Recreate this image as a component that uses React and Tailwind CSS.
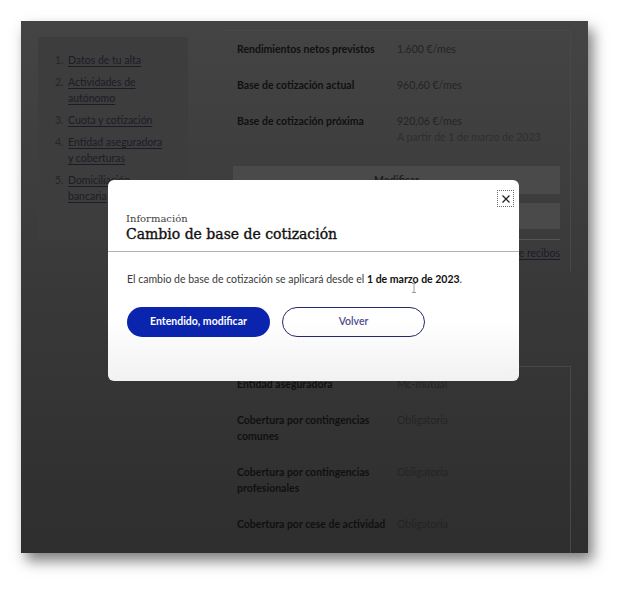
import React from "react";

const navItems = [
  "Datos de tu alta",
  "Actividades de autónomo",
  "Cuota y cotización",
  "Entidad aseguradora y coberturas",
  "Domiciliación bancaria",
];

function Row({ label, value, sub }) {
  return (
    <div className="flex pl-[4px]">
      <div className="w-[160px] shrink-0 font-bold text-[#101010]">{label}</div>
      <div className="flex flex-col">
        <span className="text-[#242424]">{value}</span>
        {sub && <span className="text-[#2e2e2e]">{sub}</span>}
      </div>
    </div>
  );
}

export default function App() {
  return (
    <div className="w-[630px] h-[595px] bg-white pt-[21px] pl-[21px] font-['Lato','Liberation_Sans',sans-serif]">
      <div className="relative w-[567px] h-[532px] overflow-hidden flex items-start px-[17px] bg-linear-to-b from-[#444444] to-[#2e2e2e] shadow-[5px_8px_13px_rgba(0,0,0,0.5)]">
        {/* Sidebar */}
        <aside className="mt-[16px] w-[150px] h-[203px] shrink-0 bg-[#3d3d3d] pl-[17px] pt-[15px]">
          <ol className="flex flex-col gap-[6px] text-[10.5px] leading-[16px]">
            {navItems.map((t, i) => (
              <li key={t} className="flex">
                <span className="w-[13px] shrink-0 text-[#262626]">{i + 1}.</span>
                <span className="w-[100px] underline underline-offset-2 decoration-[#1c1c26] text-[#1c1c26]">
                  {t}
                </span>
              </li>
            ))}
          </ol>
        </aside>

        {/* Main */}
        <main className="ml-[34px] mt-[9px] w-[349px] shrink-0 flex flex-col text-[10.5px] leading-[16px]">
          <section className="border-t border-r border-[#484848] px-[11px] pt-[10px] pr-[10px] pb-[10px]">
            <div className="flex flex-col gap-[20px]">
              <Row label="Rendimientos netos previstos" value="1.600 €/mes" />
              <Row label="Base de cotización actual" value="960,60 €/mes" />
              <Row
                label="Base de cotización próxima"
                value="920,06 €/mes"
                sub="A partir de 1 de marzo de 2023"
              />
            </div>
            <div className="mt-[21px] flex flex-col gap-[9px]">
              <div className="h-[28px] bg-[#4a4a4a] flex items-center justify-center font-bold text-[#1e1e1e]">
                Modificar
              </div>
              <div className="h-[26px] bg-[#4a4a4a] flex items-center justify-center font-bold text-[#1e1e1e]">
                Consultar recibos
              </div>
            </div>
            <div className="mt-[10px] border-t border-[#555555]" />
            <div className="mt-[5px] flex justify-end">
              <span className="underline underline-offset-2 text-[#1c1c26]">Ver histórico de recibos</span>
            </div>
          </section>

          <section className="mt-[95px] border-t border-r border-[#484848] px-[11px] pt-[9px] pb-[30px]">
            <div className="flex flex-col gap-[20px]">
              <Row label="Entidad aseguradora" value="Mc-mutual" />
              <Row label="Cobertura por contingencias comunes" value="Obligatoria" />
              <Row label="Cobertura por contingencias profesionales" value="Obligatoria" />
              <Row label="Cobertura por cese de actividad" value="Obligatoria" />
            </div>
          </section>
        </main>

        {/* Modal */}
        <div className="absolute left-[87px] top-[159px] w-[411px] h-[201px] rounded-[6px] bg-linear-to-b from-white from-70% to-[#f1f1f1] flex flex-col">
          <div className="flex justify-end pt-[10px] pr-[5px]">
            <button className="w-[17px] h-[17px] border border-dotted border-[#6a6a6a] flex items-center justify-center">
              <svg width="10" height="10" viewBox="0 0 10 10">
                <path d="M1.5 1.5 L8.5 8.5 M8.5 1.5 L1.5 8.5" stroke="#222" strokeWidth="1.3" fill="none" />
              </svg>
            </button>
          </div>
          <div className="mt-[5px] pl-[18px] pb-[8px] border-b border-[#b3b3b3] font-['DejaVu_Serif',serif]">
            <div className="text-[10px] leading-[13px] text-[#404040]">Información</div>
            <div className="text-[14px] leading-[18px] text-[#111111] [-webkit-text-stroke:0.35px_#111111]">
              Cambio de base de cotización
            </div>
          </div>
          <div className="px-[19px] pt-[19px]">
            <p className="text-[10.5px] leading-[16px] text-[#3a3a3a]">
              El cambio de base de cotización se aplicará desde el{" "}
              <span className="font-bold text-[#111111]">1 de marzo de 2023</span>.
            </p>
            <div className="mt-[20px] flex gap-[12px]">
              <button className="w-[143px] h-[30px] rounded-full bg-[#0b24ad] text-white font-bold text-[10.5px]">
                Entendido, modificar
              </button>
              <button className="w-[143px] h-[30px] rounded-full border-[1.5px] border-[#26286e] text-[#4d4e8c] font-semibold text-[10.5px]">
                Volver
              </button>
            </div>
          </div>
          <svg className="absolute left-[303px] top-[103px]" width="6" height="10" viewBox="0 0 6 10">
            <path d="M1 0.5 H5 M3 0.5 V9.5 M1 9.5 H5" stroke="#9a9a9a" strokeWidth="1" fill="none" />
          </svg>
        </div>
      </div>
    </div>
  );
}
